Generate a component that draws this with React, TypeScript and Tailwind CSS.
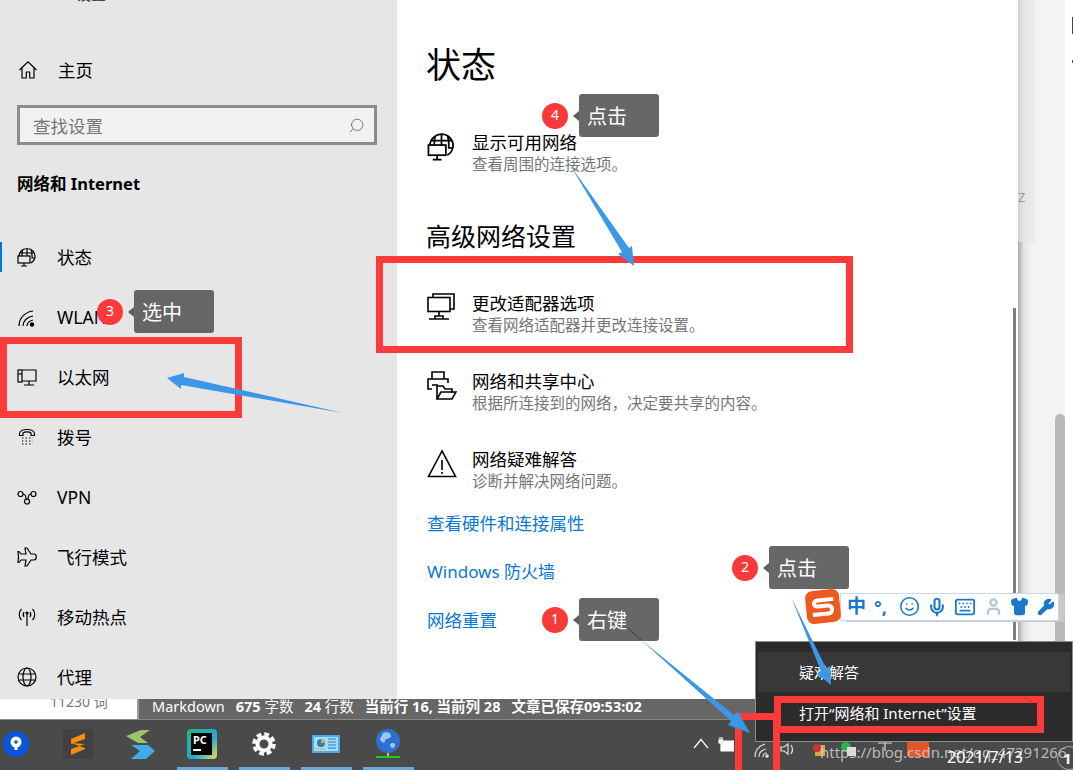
import React from 'react'
import { Keyboard, Mic, Search, Shirt, Smile, User, Wrench } from 'lucide-react'

const ic = { fill: 'none', stroke: 'currentColor', strokeWidth: 1.2 }

function HomeIcon() {
    return (
        <svg width="20" height="20" viewBox="0 0 20 20" {...ic}>
            <path d="M1.5 10 10 1.8 18.5 10M4 8v10h4.3v-6h3.4v6H16V8" />
        </svg>
    )
}
function StatusIcon({ size = 20 }: { size?: number }) {
    return (
        <svg width={size} height={size} viewBox="0 0 20 20" {...ic}>
            <path d="M2 9a8 8 0 1 1 16 1 8 8 0 0 1-4 6M10 1v8M6 2.5C5 4 5 7 5 9M14 2.5c1 2 1.2 5 1 9M2.5 6h15M15 11h3" />
            <rect x="1" y="9" width="12" height="7" />
            <path d="M7 16v3M4 19h6" />
        </svg>
    )
}
function WifiIcon() {
    return (
        <svg width="20" height="20" viewBox="0 0 20 20" {...ic}>
            <path d="M2 19C2 11 8 5 16 4M6 19c0-5 4-9 10-10M10 19c0-3 2-5 6-6" />
            <circle cx="15" cy="17.5" r="1.6" fill="currentColor" />
        </svg>
    )
}
function EthernetIcon() {
    return (
        <svg width="20" height="20" viewBox="0 0 20 20" {...ic}>
            <path d="M5 3h14v11H5M12 14v4M7 18h10" />
            <rect x="1" y="3" width="4" height="12" />
            <path d="M1 7h4" />
        </svg>
    )
}
function DialIcon() {
    return (
        <svg width="20" height="20" viewBox="0 0 20 20" {...ic}>
            <path d="M1.5 7C1.5 1 16.5 1 16.5 7v1.5h-3.5V6C11 4.5 7 4.5 5 6v2.500H1.500z" transform="translate(1 0)" />
            <path strokeDasharray="1.4 2.2" d="M5 11h11M5 14h11M5 17h11" />
        </svg>
    )
}
function VpnIcon() {
    return (
        <svg width="20" height="20" viewBox="0 0 20 20" {...ic}>
            <circle cx="3.500" cy="7" r="2.500" />
            <circle cx="16.500" cy="7" r="2.500" />
            <circle cx="10" cy="14.500" r="2.500" />
            <path d="M6 7c2 0 3 3 3 5.500M14 7c-3 0-3 3-3 5.500" />
        </svg>
    )
}
function PlaneIcon() {
    return (
        <svg width="20" height="20" viewBox="0 0 20 20" {...ic}>
            <path d="M10 1h-2l1 6H4L2 4.500H1L1.500 10 1 15.500h1L4 13h5l-1 6h2l4-6h3c3 0 3-6 0-6h-3z" />
        </svg>
    )
}
function HotspotIcon() {
    return (
        <svg width="20" height="20" viewBox="0 0 20 20" {...ic}>
            <path d="M10 7v12M4.500 2C1.500 5 1.500 10 4.500 13M15.500 2c3 3 3 8 0 11M7 5c-1 1.500-1 3.500 0 5M13 5c1 1.500 1 3.500 0 5" />
            <circle cx="10" cy="6" r="1" fill="currentColor" />
        </svg>
    )
}
function GlobeIcon() {
    return (
        <svg width="20" height="20" viewBox="0 0 20 20" {...ic}>
            <circle cx="10" cy="10" r="9" />
            <ellipse cx="10" cy="10" rx="4" ry="9" />
            <path d="M1.500 7h17M1.500 13h17" />
        </svg>
    )
}
function AdapterIcon() {
    return (
        <svg width="28" height="28" viewBox="0 0 28 28" fill="none" stroke="currentColor" strokeWidth="1.600">
            <path d="M6 5V1h21v15h-4" />
            <rect x="1" y="4.500" width="22" height="14" />
            <path d="M12 18.500v4M2 26h20M8 26v-3h8v3" />
        </svg>
    )
}
function SharingIcon() {
    return (
        <svg width="30" height="30" viewBox="0 0 30 30" fill="none" stroke="currentColor" strokeWidth="1.600">
            <path d="M5 8V1h12v7M5 18H1V8h20v4M5 14h6" />
            <path d="M10 28V15h6l2 3h7v4M10 28l4-7h15l-4 7z" />
        </svg>
    )
}
function WarnIcon() {
    return (
        <svg width="30" height="30" viewBox="0 0 30 30" fill="none" stroke="currentColor" strokeWidth="1.600">
            <path d="M15 2 1.500 27.500h27z" />
            <path d="M15 11v10M15 23v2" />
        </svg>
    )
}

const navItems = [
    { label: '状态', icon: <StatusIcon />, active: true },
    { label: 'WLAN', icon: <WifiIcon /> },
    { label: '以太网', icon: <EthernetIcon /> },
    { label: '拨号', icon: <DialIcon /> },
    { label: 'VPN', icon: <VpnIcon /> },
    { label: '飞行模式', icon: <PlaneIcon /> },
    { label: '移动热点', icon: <HotspotIcon /> },
    { label: '代理', icon: <GlobeIcon /> },
]

function Sidebar() {
    return (
        <aside className="w-[397px] h-full shrink-0 bg-[#e6e6e6] text-black overflow-hidden flex flex-col">
            <div className="h-[3px] overflow-hidden pl-[76px] shrink-0">
                <div className="-mt-[17px] text-[15px] leading-[22px] text-[#333]">设置</div>
            </div>
            <div className="h-[60px] mt-[37px] flex items-center pl-[18px] gap-[20px] text-[17.5px] shrink-0">
                <HomeIcon />
                <span>主页</span>
            </div>
            <div className="h-[40px] mt-[5px] mx-[17px] w-[360px] shrink-0 border-[3px] border-[#8c8c8c] bg-[#f1f1f1] flex items-center justify-between pl-[13px] pr-[9px] text-[17.5px] text-[#777]">
                <span className="relative top-[1px]">查找设置</span>
                <Search size={17} strokeWidth={1.2} className="-scale-x-100 text-[#666]" />
            </div>
            <div className="h-[26px] mt-[26px] pl-[17px] shrink-0 text-[16.5px] leading-[26px] font-bold">网络和 Internet</div>
            <div className="mt-[30px] flex flex-col">
                {navItems.map((item) => (
                    <div key={item.label} className="h-[60px] shrink-0 flex items-center text-[17.5px]">
                        <div className={item.active ? 'w-[2px] h-[30px] bg-[#0078d7]' : 'w-[2px] h-[30px]'} />
                        <div className="ml-[15px] w-[20px] h-[20px] flex items-center">{item.icon}</div>
                        <span className="ml-[20px]">{item.label}</span>
                    </div>
                ))}
            </div>
        </aside>
    )
}

function SettingRow({ icon, title, sub, className }: { icon: React.ReactNode; title: string; sub: string; className: string }) {
    return (
        <div className={`flex ${className}`}>
            <div className="w-[45px] shrink-0 pt-[1px]">{icon}</div>
            <div>
                <div className="text-[17.5px] leading-[22px] text-black">{title}</div>
                <div className="text-[15.500px] leading-[22px] text-[#767676]">{sub}</div>
            </div>
        </div>
    )
}

function Content() {
    return (
        <main className="w-[621px] h-full shrink-0 bg-white flex overflow-hidden">
            <div className="flex-1 pl-[30px] flex flex-col text-black">
                <h1 className="mt-[42px] h-[46px] text-[35px] leading-[46px] -ml-[1px]">状态</h1>
                <SettingRow className="mt-[43px]" icon={<StatusIcon size={29} />} title="显示可用网络" sub="查看周围的连接选项。" />
                <h2 className="mt-[46px] h-[30px] text-[25px] leading-[30px] -ml-[1px]">高级网络设置</h2>
                <SettingRow className="mt-[41px]" icon={<AdapterIcon />} title="更改适配器选项" sub="查看网络适配器并更改连接设置。" />
                <SettingRow className="mt-[34px]" icon={<SharingIcon />} title="网络和共享中心" sub="根据所连接到的网络，决定要共享的内容。" />
                <SettingRow className="mt-[34px]" icon={<WarnIcon />} title="网络疑难解答" sub="诊断并解决网络问题。" />
                <a className="mt-[19px] h-[24px] text-[17.5px] leading-[24px] text-[#0a78d4]">查看硬件和连接属性</a>
                <a className="mt-[25px] h-[24px] text-[17px] leading-[24px] text-[#0a78d4]">Windows 防火墙</a>
                <a className="mt-[24px] h-[24px] text-[17.5px] leading-[24px] text-[#0a78d4]">网络重置</a>
            </div>
            <div className="w-[3px] h-[332px] mt-[308px] mr-[2px] bg-[#808080]" />
        </main>
    )
}

function RightEdge() {
    return (
        <div className="flex-1 h-full flex bg-white">
            <div className="w-[47px] h-full flex justify-between items-start bg-[linear-gradient(90deg,#aaaaaa_0px,#e4e4e4_6px,#f3f3f3_14px)]">
                <div className="w-[17px] h-[242px] bg-[#e5e5e5]/70 flex items-end pb-[38px] text-[13px] leading-none text-[#999]">Z</div>
                <div className="w-[10px] h-[285px] mt-[414px] rounded-t-full bg-[#b9b9b9]" />
            </div>
            <div className="flex-1 relative">
                <div className="absolute right-0 top-[17px] w-[1px] h-[17px] bg-[#444]" />
                <div className="absolute right-0 top-[60px] w-[1px] h-[3px] bg-[#555]" />
            </div>
        </div>
    )
}

function StatusBar() {
    return (
        <div className="h-[20px] flex shrink-0">
            <div className="w-[137px] bg-white overflow-hidden pl-[50px]">
                <div className="-mt-[7px] text-[14px] leading-[20px] text-[#777]">11230 词</div>
            </div>
            <div className="flex-1 border-l-2 border-[#999] bg-[#666] pl-[13px] pb-[4px] flex items-center gap-[11px] text-[14.500px] text-white whitespace-nowrap">
                <span>Markdown</span>
                <span><b>675</b> 字数</span>
                <span><b>24</b> 行数</span>
                <span className="font-bold">当前行 16, 当前列 28</span>
                <span className="font-bold">文章已保存09:53:02</span>
            </div>
        </div>
    )
}

function AppSlot({ children, open }: { children: React.ReactNode; open?: boolean }) {
    return (
        <div className="w-[62px] h-full flex flex-col items-center shrink-0">
            <div className="h-[47px] pt-[1px] flex items-center justify-center">{children}</div>
            {open && <div className="w-[51px] h-[3px] bg-[#6aa9d8]" />}
        </div>
    )
}

function Taskbar() {
    return (
        <div className="flex-1 border-t border-[#888] bg-[#4a4a4a] flex">
            <div className="flex -ml-[15px]">
                <AppSlot>
                    <svg width="26" height="26" viewBox="0 0 26 26">
                        <circle cx="13" cy="13" r="13" fill="#0a55dc" />
                        <circle cx="13" cy="11" r="5.500" fill="#fff" />
                        <path d="M11.500 13h3v6h-3z" fill="#fff" />
                        <circle cx="13" cy="11" r="1.800" fill="#0a55dc" />
                    </svg>
                </AppSlot>
                <AppSlot>
                    <div className="w-[30px] h-[30px] rounded-[3px] bg-[#414141] flex items-center justify-center">
                        <svg width="16" height="24" viewBox="0 0 16 24">
                            <path d="M15 1v6L1 12V7zM1 11l14 5v1L1 23v-6l14-5" fill="#f78d0c" />
                        </svg>
                    </div>
                </AppSlot>
                <AppSlot>
                    <svg width="29" height="29" viewBox="0 0 29 29">
                        <path d="M15 0h9L14 7l8 6H12L0 6z" fill="#9cc46b" />
                        <path d="M5 15h17l7 6-9 8H5l9-8z" fill="#3daee8" />
                    </svg>
                </AppSlot>
                <AppSlot open>
                    <div className="relative w-[30px] h-[30px] bg-[linear-gradient(135deg,#20b87a,#23a9d8_60%,#f0e040)] rounded-[4px]">
                        <div className="absolute left-[4px] top-[4px] w-[21px] h-[22px] bg-black text-white text-[11px] font-bold leading-[13px] pl-[2px]">
                            PC
                            <div className="w-[8px] h-[2px] mt-[3px] bg-white" />
                        </div>
                    </div>
                </AppSlot>
                <AppSlot open>
                    <svg width="24" height="24" viewBox="0 0 24 24" fill="none" stroke="#fff">
                        <circle cx="12" cy="12" r="6.500" strokeWidth="4" />
                        <circle cx="12" cy="12" r="10" strokeWidth="3.500" strokeDasharray="4.850 3" />
                    </svg>
                </AppSlot>
                <AppSlot open>
                    <svg width="28" height="18" viewBox="0 0 28 18">
                        <rect width="28" height="18" fill="#4aa8ec" />
                        <rect x="2" y="2" width="24" height="14" fill="#a5dcfa" />
                        <circle cx="9" cy="8" r="4" fill="#1f7fc8" />
                        <path d="M9 4a4 4 0 0 1 4 4H9z" fill="#f4a522" />
                        <path d="M16 4h8M16 7h8M16 10h8M16 13h8" stroke="#1f7fc8" />
                        <path d="M3 14h10" stroke="#f4a522" />
                    </svg>
                </AppSlot>
                <AppSlot open>
                    <svg width="26" height="30" viewBox="0 0 26 30">
                        <circle cx="13" cy="12" r="12" fill="#2f6fd0" />
                        <path d="M8 4c4-2 8 0 8 3s-6 2-6 5-5 1-5-2zM15 15c3-2 6-1 5 2s-5 3-5-2z" fill="#9cc6f0" />
                        <path d="M13 24v3" stroke="#bbb" strokeWidth="2" />
                        <path d="M1 28h24" stroke="#19d119" strokeWidth="2" />
                    </svg>
                </AppSlot>
            </div>
            <div className="ml-[274px] flex items-start pt-[18px] gap-[9px] text-white">
                <svg width="16" height="11" viewBox="0 0 16 11" fill="none" stroke="currentColor" strokeWidth="1.200">
                    <path d="M1 10 8 1.500 15 10" />
                </svg>
                <svg width="16" height="15" viewBox="0 0 16 15" fill="none" stroke="currentColor" strokeWidth="1.200" className="-mt-[1px]">
                    <path d="M2 0v3M4 0v3M1 3h4v3H1zM3 6v8h13V4H6" fill="#fff" />
                </svg>
            </div>
        </div>
    )
}

// badge number + grey callout, these sit on top of the screenshot
function Callout({ n, text, className }: { n: number; text: string; className: string }) {
    return (
        <div className={`absolute flex items-center h-[43px] ${className}`}>
            <div className="w-[26px] h-[26px] rounded-full bg-[#f93a3a] text-white text-[14px] leading-[24px] text-center">{n}</div>
            <div className="ml-[5px] w-0 h-0 border-y-[5px] border-y-transparent border-r-[6px] border-r-[#5f5f5f]" />
            <div className="w-[80px] h-[43px] rounded-[3px] bg-[#5f5f5f]/95 pl-[8px] text-white text-[20px] leading-[45px]">{text}</div>
        </div>
    )
}

function RedBox({ className }: { className: string }) {
    return <div className={`absolute border-[7px] border-[#fb3a3a] ${className}`} />
}

function Arrows() {
    return (
        <svg className="absolute inset-0 pointer-events-none" width="1073" height="770" viewBox="0 0 1073 770">
            <g fill="#3c97e6">
                <path d="M343 413 181 385 181 389 167 378 184 373 184 377z" />
                <path d="M570 165 629 248 632 246 634 266 618 254 622 252z" />
                <path d="M791 597 826 668 830 666 831 685 817 674 821 671z" />
                <path d="M640 639 734 715 738 712 750 733 728 725 731 721z" />
            </g>
            <path d="M628 628 641 640" stroke="#1d3f66" strokeWidth="1" />
        </svg>
    )
}

function SogouBar() {
    return (
        <div className="absolute left-[806px] top-[590px] h-[33px] flex items-center">
            <div className="w-[34px] h-[33px] rounded-[7px] bg-[#ee5a1e] -rotate-6 flex items-center justify-center z-10">
                <svg width="26" height="20" viewBox="0 0 26 20" fill="none" stroke="#fff" strokeWidth="4">
                    <path d="M24 3H8C3 3 3 9 8 9h10c5 0 5 8 0 8H2" />
                </svg>
            </div>
            <div className="w-[219px] h-[28px] border border-[#c4d9ec] bg-white rounded-r-[2px] flex items-center pl-[6px] text-[#1b78c9] shadow-[6px_1px_0_#c8c8c8]">
                <span className="text-[19px] font-bold leading-none">中</span>
                <span className="ml-[8px] w-[20px] text-[18px] font-bold leading-none">°,</span>
                <Smile size={21} strokeWidth={1.800} className="ml-[5px]" />
                <Mic size={20} strokeWidth={2.500} className="ml-[7px]" />
                <Keyboard size={22} strokeWidth={2} className="ml-[7px]" />
                <User size={19} strokeWidth={3} className="ml-[8px] text-[#b7c6d3]" />
                <Shirt size={19} fill="currentColor" className="ml-[7px]" />
                <Wrench size={18} fill="currentColor" className="ml-[8px]" />
            </div>
        </div>
    )
}

function TrayPopup() {
    return (
        <div className="absolute left-[755px] top-[641px] w-[318px] h-[101px] border border-[#8c8c8c] bg-[#2b2b2b] pt-[10px] pl-[2px] pr-[2px] text-[15px] text-white">
            <div className="h-[40px] bg-[#383838] pl-[41px] leading-[40px]">疑难解答</div>
            <div className="h-[40px] mt-[1px] pl-[41px] leading-[40px]">打开“网络和 Internet”设置</div>
        </div>
    )
}

function TrayOverlay() {
    return (
        <>
            <svg className="absolute left-[753px] top-[741px]" width="150" height="20" viewBox="0 0 150 20" fill="none" stroke="#ddd" strokeWidth="1.200">
                <path d="M2 16C2 9 6 5 12 3M6 16c0-4 3-7 7-8M10 16c0-2 1-4 4-4" />
                <circle cx="14" cy="15" r="1.200" fill="#fff" />
                <path d="M28 6h3l4-3v10l-4-3h-3zM38 4c2 3 2 6 0 9" />
                <rect x="62" y="4" width="10" height="11" fill="#d9a441" stroke="none" />
                <circle cx="64" cy="7" r="4" fill="#c33" stroke="none" />
                <circle cx="93" cy="6" r="5" fill="#2cb050" stroke="none" />
                <rect x="94" y="6" width="9" height="9" fill="#ddd" stroke="none" />
                <path d="M125 2h14M132 2v8" />
            </svg>
            <div className="absolute left-[907px] top-[741px] w-[22px] h-[16px] rounded-[3px] bg-[#e3562a]" />
            <div className="absolute left-[820px] top-[741px] whitespace-nowrap text-[15px] leading-[22px] text-[#d8d8d8]/80">https://blog.csdn.net/qq_47291266</div>
            <div className="absolute left-[947px] top-[746px] text-[16px] leading-[22px] text-white">2021/7/13</div>
            <div className="absolute left-[1057px] top-[746px] w-[24px] h-[24px] rounded-full border border-[#aaa] pl-[5px] text-[15px] font-bold leading-[22px] text-white">1</div>
        </>
    )
}

export default function App() {
    return (
        <div className="relative w-[1073px] h-[770px] overflow-hidden flex flex-col bg-white font-['Noto_Sans','Noto_Sans_CJK_SC',sans-serif]">
            <div className="h-[699px] flex shrink-0">
                <Sidebar />
                <Content />
                <RightEdge />
            </div>
            <StatusBar />
            <Taskbar />

            <TrayOverlay />
            <TrayPopup />
            <SogouBar />
            <RedBox className="left-0 top-[337px] w-[242px] h-[81px]" />
            <RedBox className="left-[376px] top-[256px] w-[477px] h-[97px]" />
            <RedBox className="left-[774px] top-[696px] w-[270px] h-[37px]" />
            <RedBox className="left-[735px] top-[713px] w-[45px] h-[70px]" />
            <Callout n={3} text="选中" className="left-[97px] top-[290px]" />
            <Callout n={4} text="点击" className="left-[542px] top-[94px]" />
            <Callout n={2} text="点击" className="left-[732px] top-[546px]" />
            <Callout n={1} text="右键" className="left-[542px] top-[598px]" />
            <Arrows />
        </div>
    )
}
